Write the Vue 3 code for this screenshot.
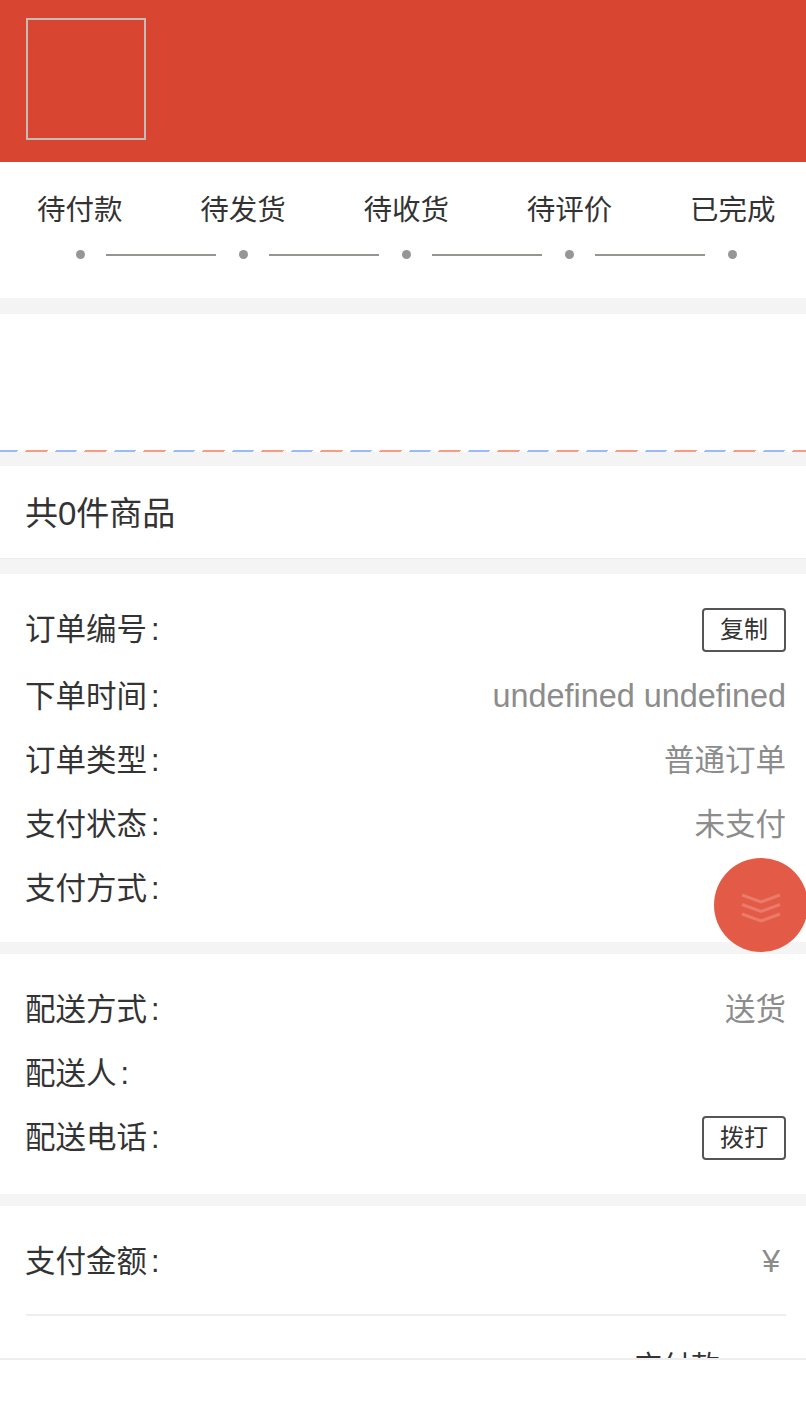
<template>
  <div class="page">
    <header class="banner">
      <div class="thumb"></div>
    </header>

    <section class="steps">
      <div class="step-labels">
        <span v-for="step in steps" :key="step">{{ step }}</span>
      </div>
      <div class="step-track">
        <template v-for="(step, i) in steps" :key="step">
          <i class="dot"></i>
          <i v-if="i < steps.length - 1" class="line"></i>
        </template>
      </div>
    </section>

    <section class="address">
      <div class="airmail"></div>
    </section>

    <section class="count">共0件商品</section>

    <section class="card order">
      <div v-for="row in orderRows" :key="row.label" class="row">
        <span class="label">{{ row.label }}<em class="colon">:</em></span>
        <button v-if="row.action" class="action">{{ row.action }}</button>
        <span v-else class="value" :class="{ latin: row.latin }">{{ row.value }}</span>
      </div>
    </section>

    <section class="card delivery">
      <div v-for="row in deliveryRows" :key="row.label" class="row">
        <span class="label">{{ row.label }}<em class="colon">:</em></span>
        <button v-if="row.action" class="action">{{ row.action }}</button>
        <span v-else class="value">{{ row.value }}</span>
      </div>
    </section>

    <section class="card payment">
      <div class="row amount">
        <span class="label">支付金额<em class="colon">:</em></span>
        <span class="value yen">¥</span>
      </div>
      <div class="due">应付款</div>
    </section>

    <div class="float-btn">
      <svg width="40" height="30" viewBox="0 0 40 30" fill="none" stroke="#ea7a6a" stroke-width="3">
        <path d="M1 2 L20 9 L39 2" />
        <path d="M1 11.5 L20 18.5 L39 11.5" />
        <path d="M1 21 L20 28 L39 21" />
      </svg>
    </div>

    <footer class="footer"></footer>
  </div>
</template>

<script setup>
const steps = ['待付款', '待发货', '待收货', '待评价', '已完成']

const orderRows = [
  { label: '订单编号', action: '复制' },
  { label: '下单时间', value: 'undefined undefined', latin: true },
  { label: '订单类型', value: '普通订单' },
  { label: '支付状态', value: '未支付' },
  { label: '支付方式', value: '' },
]

const deliveryRows = [
  { label: '配送方式', value: '送货' },
  { label: '配送人', value: '' },
  { label: '配送电话', action: '拨打' },
]
</script>

<style>
html, body {
  margin: 0;
  background: #fff;
}
</style>

<style scoped>
.page {
  position: relative;
  width: 806px;
  height: 1422px;
  overflow: hidden;
  background: #f4f4f4;
  font-family: "Liberation Sans", "Noto Sans CJK SC", sans-serif;
  color: #333;
}

.banner {
  height: 162px;
  box-sizing: border-box;
  padding: 18px 26px 0;
  background: #d84632;
}

.thumb {
  width: 120px;
  height: 122px;
  box-sizing: border-box;
  border: 2px solid #c4bcb8;
}

.steps {
  height: 136px;
  box-sizing: border-box;
  padding-top: 26px;
  background: #fff;
}

.step-labels {
  display: flex;
  justify-content: space-between;
  padding: 1px 30px 0 37px;
  font-size: 28.5px;
  line-height: 42px;
}

.step-labels span {
  width: 86px;
  white-space: nowrap;
}

.step-track {
  display: flex;
  align-items: center;
  justify-content: space-between;
  margin-top: 19px;
  padding: 0 69px 0 76px;
}

.dot {
  width: 9px;
  height: 9px;
  border-radius: 50%;
  background: #969696;
}

.line {
  width: 110px;
  height: 2px;
  margin: 0 1px 0 -1px;
  background: #969690;
}

.address {
  position: relative;
  height: 138px;
  margin-top: 16px;
  background: #fff;
}

.airmail {
  position: absolute;
  left: 0;
  right: 0;
  bottom: 0;
  height: 2px;
  background: repeating-linear-gradient(135deg, #99bcf8 0 13.4px, #fff 13.4px 18.7px, #f59c84 18.7px 34.3px, #fff 34.3px 39.6px, #99bcf8 39.6px 41.72px);
}

.count {
  height: 92px;
  margin-top: 14px;
  padding-left: 25px;
  background: #fff;
  border-bottom: 1px solid #ececec;
  font-size: 33px;
  line-height: 95px;
}

.card {
  box-sizing: border-box;
  padding: 0 20px 0 25px;
  background: #fff;
}

.order {
  height: 368px;
  margin-top: 15px;
  padding-top: 24px;
}

.delivery {
  height: 240px;
  margin-top: 12px;
  padding-top: 23px;
}

.payment {
  position: relative;
  height: 216px;
  margin-top: 12px;
  padding-top: 24px;
}

.row {
  display: flex;
  justify-content: space-between;
  align-items: center;
  height: 64px;
  font-size: 30.5px;
}

.order .row:first-child {
  height: 62px;
  margin-bottom: 4px;
}

.label,
.value {
  margin-bottom: 5px;
  white-space: nowrap;
}

.colon {
  padding-left: 4px;
  font-style: normal;
}

.value {
  color: #8c8c8c;
}

.latin {
  margin-bottom: 0;
  font-size: 32.4px;
}

.yen {
  margin-bottom: 0;
  padding-right: 6px;
  font-size: 32px;
}

.action {
  width: 84px;
  height: 44px;
  margin-top: 2px;
  box-sizing: border-box;
  padding: 0;
  border: 2px solid #555;
  border-radius: 4px;
  background: #fff;
  color: #333;
  font-family: inherit;
  font-size: 24px;
  line-height: 40px;
}

.amount {
  height: 86px;
  box-sizing: border-box;
  margin-left: 1px;
  padding-bottom: 22px;
  border-bottom: 2px solid #eee;
}

.amount .label {
  margin-left: -1px;
}

.due {
  margin-top: 29px;
  padding-right: 66px;
  text-align: right;
  font-size: 29px;
  line-height: 44px;
}

.float-btn {
  position: absolute;
  left: 714px;
  top: 858px;
  width: 94px;
  height: 94px;
  border-radius: 50%;
  background: #e35b46;
  display: flex;
  align-items: center;
  justify-content: center;
}

.float-btn svg {
  margin-top: 6px;
}

.footer {
  position: absolute;
  left: 0;
  right: 0;
  bottom: 0;
  height: 62px;
  border-top: 2px solid #eee;
  background: #fff;
}
</style>
